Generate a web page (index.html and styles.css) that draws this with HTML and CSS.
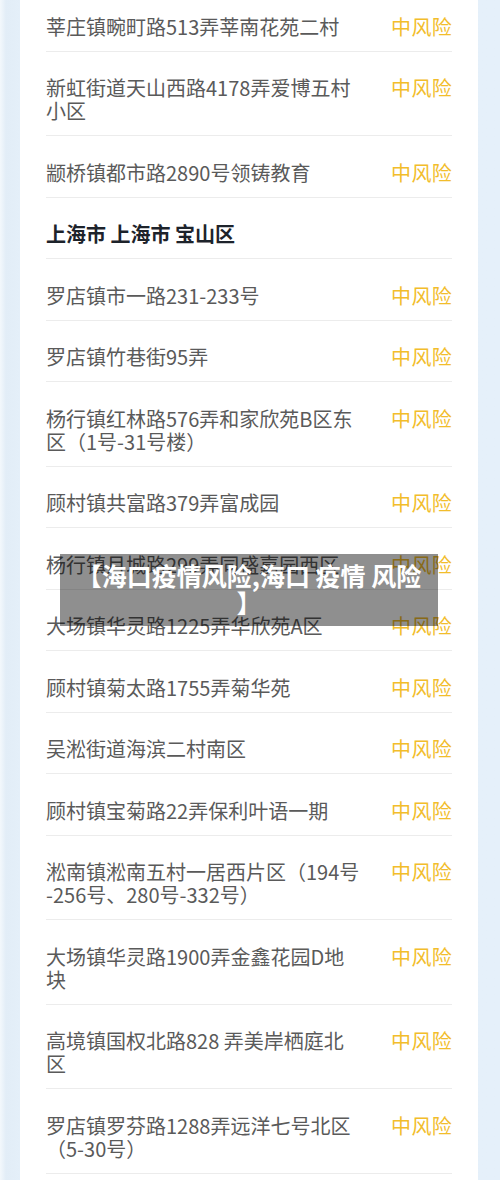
FILE: index.html
```html
<!DOCTYPE html>
<html lang="zh-CN">
<head>
<meta charset="utf-8">
<title>海口疫情风险</title>
<link rel="stylesheet" href="styles.css">
</head>
<body>
<div class="page">
  <div class="card">
    <div class="row"><span class="addr">莘庄镇畹町路513弄莘南花苑二村</span><span class="risk">中风险</span></div>
    <div class="row"><span class="addr">新虹街道天山西路4178弄爱博五村小区</span><span class="risk">中风险</span></div>
    <div class="row"><span class="addr">颛桥镇都市路2890号领铸教育</span><span class="risk">中风险</span></div>
    <div class="row heading"><span class="addr">上海市 上海市 宝山区</span></div>
    <div class="row"><span class="addr">罗店镇市一路231-233号</span><span class="risk">中风险</span></div>
    <div class="row"><span class="addr">罗店镇竹巷街95弄</span><span class="risk">中风险</span></div>
    <div class="row"><span class="addr">杨行镇红林路576弄和家欣苑B区东区（1号-31号楼）</span><span class="risk">中风险</span></div>
    <div class="row"><span class="addr">顾村镇共富路379弄富成园</span><span class="risk">中风险</span></div>
    <div class="row"><span class="addr">杨行镇月城路299弄同盛嘉园西区</span><span class="risk">中风险</span></div>
    <div class="row"><span class="addr">大场镇华灵路1225弄华欣苑A区</span><span class="risk">中风险</span></div>
    <div class="row"><span class="addr">顾村镇菊太路1755弄菊华苑</span><span class="risk">中风险</span></div>
    <div class="row"><span class="addr">吴淞街道海滨二村南区</span><span class="risk">中风险</span></div>
    <div class="row"><span class="addr">顾村镇宝菊路22弄保利叶语一期</span><span class="risk">中风险</span></div>
    <div class="row"><span class="addr">淞南镇淞南五村一居西片区（194号<br>-256号、280号-332号）</span><span class="risk">中风险</span></div>
    <div class="row"><span class="addr">大场镇华灵路1900弄金鑫花园D地块</span><span class="risk">中风险</span></div>
    <div class="row"><span class="addr">高境镇国权北路828 弄美岸栖庭北区</span><span class="risk">中风险</span></div>
    <div class="row"><span class="addr">罗店镇罗芬路1288弄远洋七号北区（5-30号）</span><span class="risk">中风险</span></div>
    <div class="row"><span class="addr">&nbsp;</span></div>
  </div>
  <div class="caption">【海口疫情风险,海口 疫情 风险<br>】</div>
</div>
</body>
</html>
```
FILE: styles.css
```css
html, body {
  margin: 0;
  padding: 0;
}
body {
  width: 500px;
  height: 1180px;
  overflow: hidden;
  background: linear-gradient(to right, #f3f8fc 0px, #e2edf7 6px, #e4eff9 20px, #e5f0fa 100%);
  font-family: "Noto Sans CJK SC", "Noto Sans", sans-serif;
}
.page {
  position: relative;
  display: flow-root;
  height: 1180px;
}
.card {
  margin: -10px 22px 0 20px;
  padding: 0 26px;
  background: #ffffff;
}
.row {
  display: flex;
  justify-content: space-between;
  align-items: flex-start;
  padding: 24.5px 0 13px;
  border-bottom: 1px solid #ececec;
  font-size: 20px;
  line-height: 23px;
}
.addr {
  width: 316px;
  color: #5a5a5a;
}
.risk {
  color: #f2bd2b;
  letter-spacing: 0.3px;
}
.heading .addr {
  color: #1d232b;
  font-weight: 700;
}
.caption {
  position: absolute;
  left: 60px;
  top: 554px;
  width: 378px;
  height: 72px;
  box-sizing: border-box;
  padding: 8px 6px;
  background: rgba(0, 0, 0, 0.44);
  color: #ffffff;
  font-size: 25px;
  line-height: 27px;
  font-weight: 700;
  text-align: center;
}
```
